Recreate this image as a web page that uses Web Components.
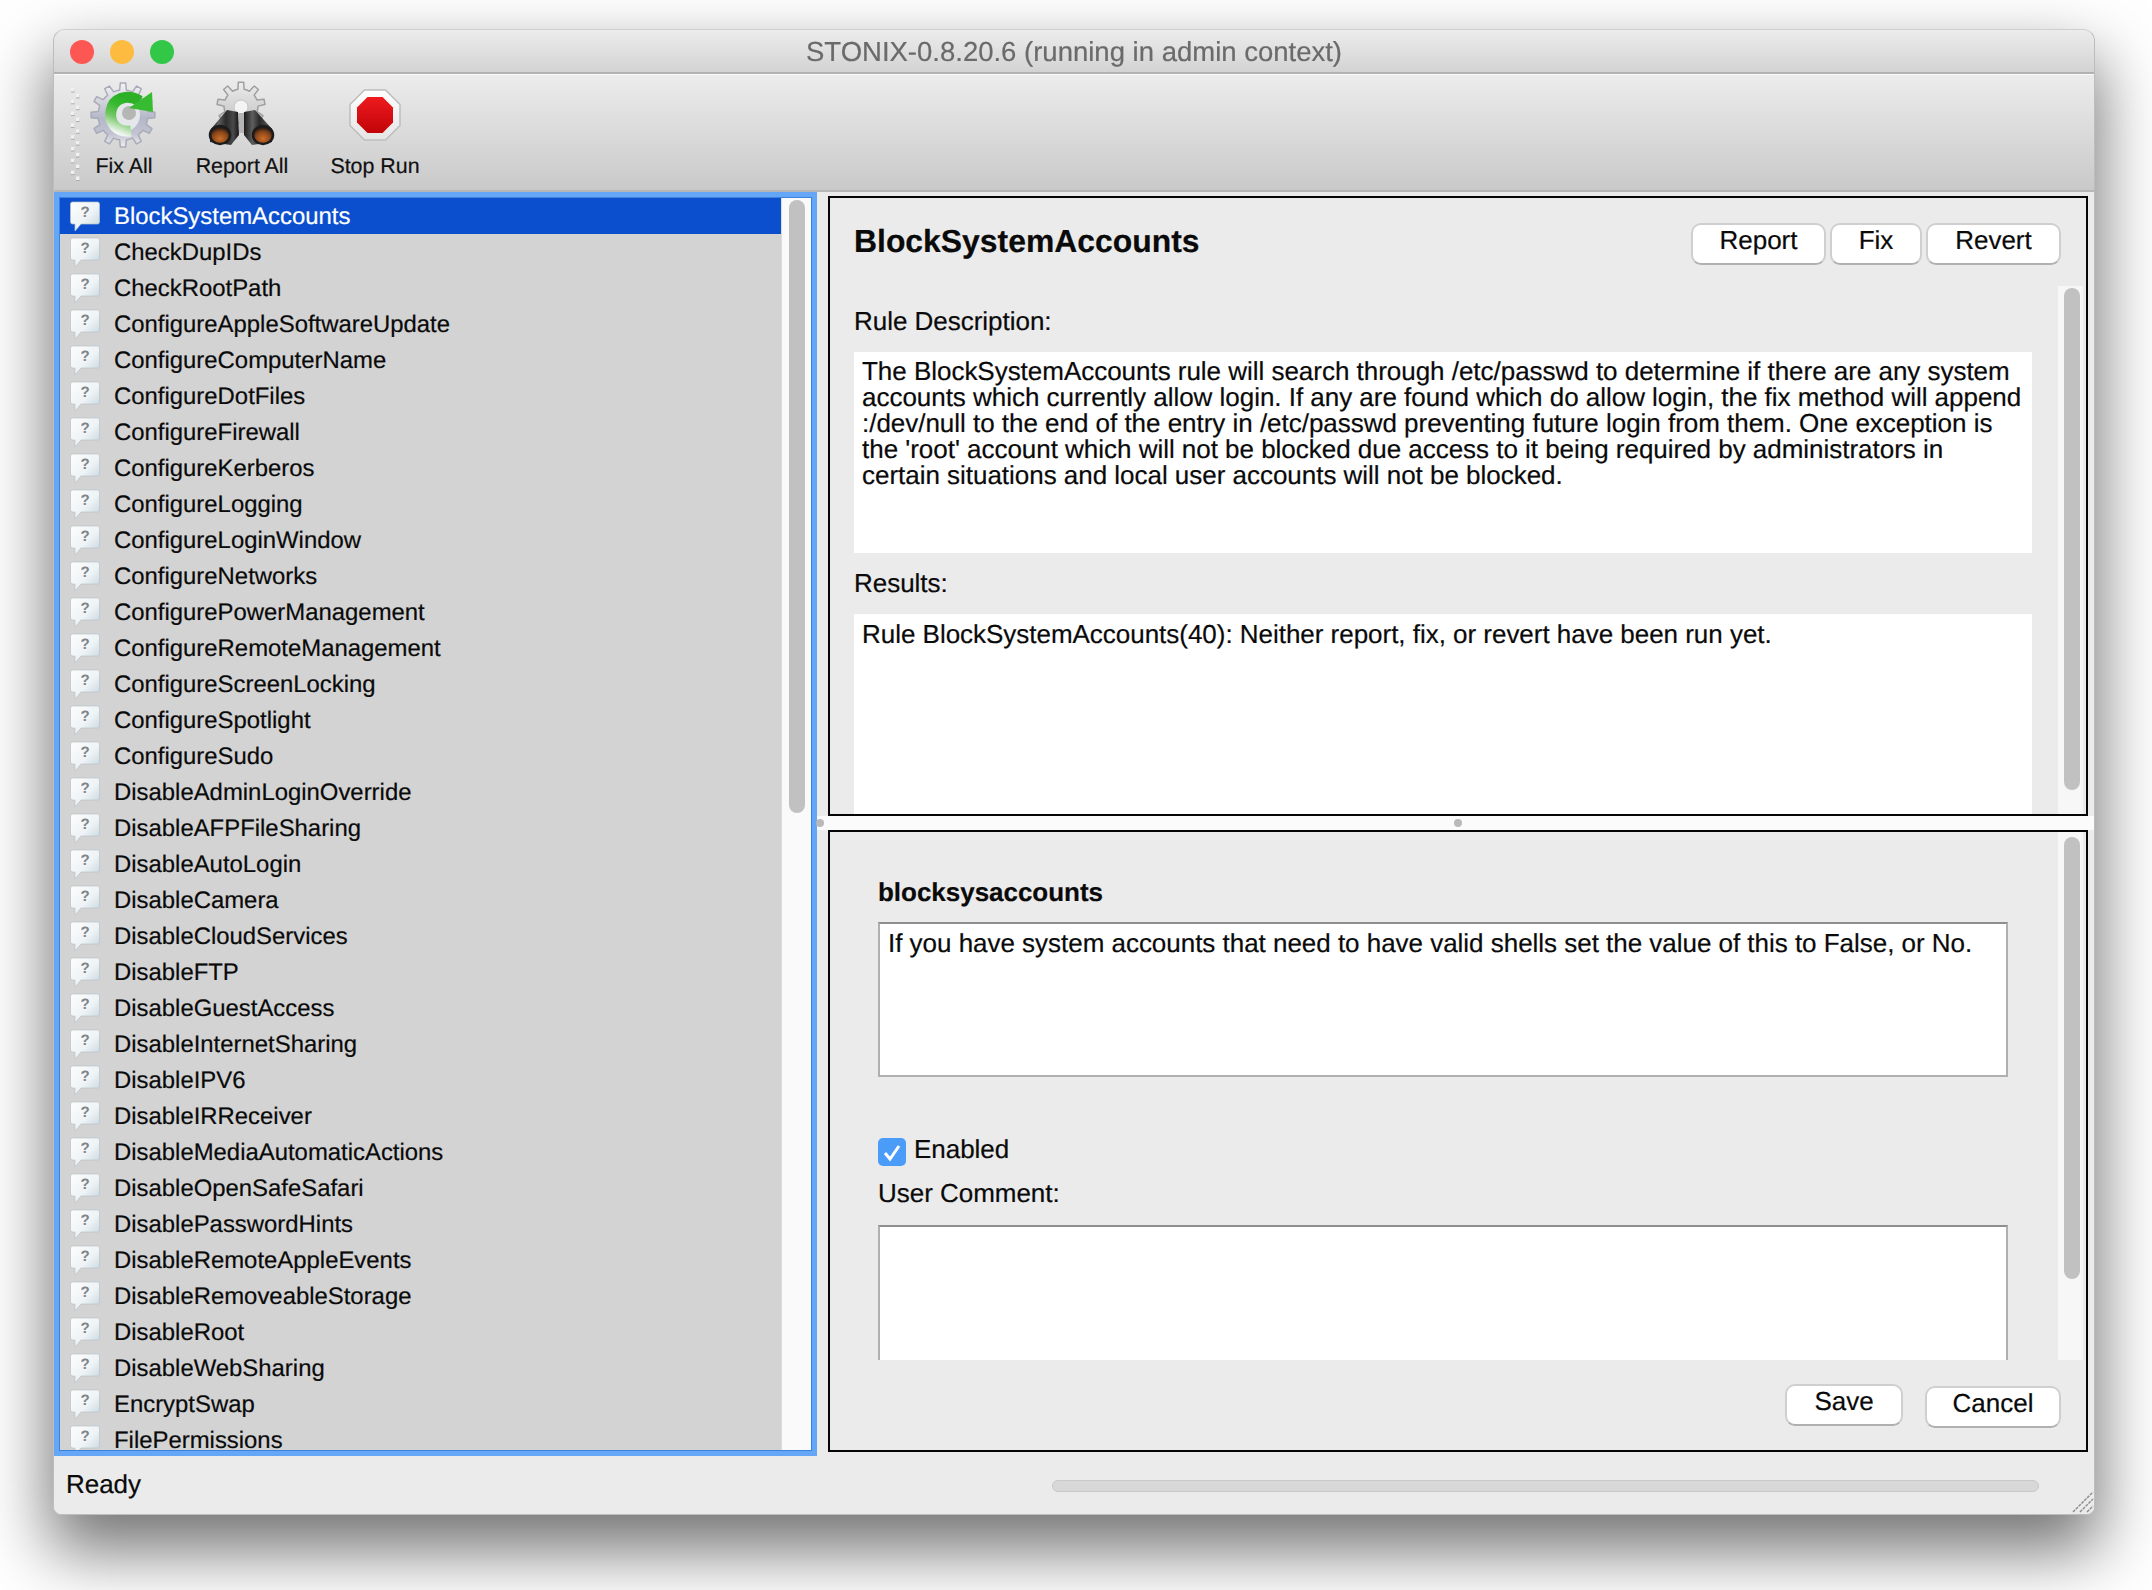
<!DOCTYPE html>
<html><head><meta charset="utf-8"><title>STONIX</title>
<style>
html,body{margin:0;padding:0;background:#fff;overflow:hidden;height:1590px}
body{font-family:"Liberation Sans",Arial,sans-serif;font-size:26px;letter-spacing:-.027px;color:#0a0a0a;text-rendering:geometricPrecision;-webkit-text-stroke:.2px currentColor}
</style></head><body>
<stonix-window></stonix-window>
<script>
function def(name, css, html, init){
  customElements.define(name, class extends HTMLElement{
    constructor(){super();const r=this.attachShadow({mode:'open'});const t=document.createElement('template');t.innerHTML='<style>'+css+'</style>'+html;r.appendChild(t.content.cloneNode(true));}
    connectedCallback(){if(init&&!this._i){this._i=1;init.call(this,this.shadowRoot);}}
  });
}
function gear(cx,cy,R,r,n){
  let d='';const st=Math.PI*2/n;
  for(let i=0;i<n;i++){
    const a=i*st-Math.PI/2;
    const p=[[a-st*.5,r],[a-st*.26,r],[a-st*.16,R],[a+st*.16,R],[a+st*.26,r]];
    p.forEach((q,j)=>{d+=(i==0&&j==0?'M':'L')+(cx+q[1]*Math.cos(q[0])).toFixed(2)+' '+(cy+q[1]*Math.sin(q[0])).toFixed(2)+' ';});
  }
  return d+'Z';
}
const ICONS={
 fix:`<svg width="76" height="76" viewBox="-38 -38 76 76">
  <defs><linearGradient id="g" x1="0" y1="0" x2="0" y2="1"><stop offset="0" stop-color="#f4f4f4"/><stop offset=".55" stop-color="#b4b7c8"/><stop offset=".8" stop-color="#c2c4d2"/><stop offset="1" stop-color="#efeff1"/></linearGradient>
  <linearGradient id="a" x1=".1" y1="1" x2=".45" y2="0"><stop offset="0" stop-color="#f2f6f2"/><stop offset=".4" stop-color="#71c763"/><stop offset=".75" stop-color="#35b92e"/><stop offset="1" stop-color="#2cb028"/></linearGradient></defs>
  <path d="${gear(-1,0,32,25,12)}" fill="url(#g)" stroke="#a9abb8" stroke-width="1.500" stroke-linejoin="round"/>
  <circle cx="-1" cy="0" r="17" fill="#e6e7ea"/>
  <circle cx="5" cy="-2" r="7" fill="#b4b7b4"/>
  <path d="M7 16 C-8 18 -15 7 -13 -4 C-11 -16 2 -22 16 -14" fill="none" stroke="url(#a)" stroke-width="11"/>
  <path d="M28 -23 L29 -3 L5 -7 Z" fill="#37bb30"/>
 </svg>`,
 report:`<svg width="76" height="76" viewBox="-38 -38 76 76">
  <defs><linearGradient id="g" x1="0" y1="0" x2="0" y2="1"><stop offset="0" stop-color="#ececec"/><stop offset="1" stop-color="#bdbdbd"/></linearGradient>
  <radialGradient id="l" cx=".5" cy=".7" r=".6"><stop offset="0" stop-color="#cc6e28"/><stop offset=".65" stop-color="#86451a"/><stop offset="1" stop-color="#2a1c14"/></radialGradient>
  <linearGradient id="b" x1="0" y1="0" x2="1" y2="0"><stop offset="0" stop-color="#1c1c1c"/><stop offset=".3" stop-color="#5e5e5e"/><stop offset=".55" stop-color="#2a2a2a"/><stop offset=".8" stop-color="#4a4a4a"/><stop offset="1" stop-color="#151515"/></linearGradient></defs>
  <path d="${gear(-1,-9,24,17,9)}" fill="url(#g)" stroke="#9f9f9f" stroke-width="1.500" stroke-linejoin="round"/>
  <circle cx="-1" cy="-8" r="7" fill="#f4f4f4" stroke="#c4c4c4"/>
  <path d="M-15 -5 L-4 -3 L-3 20 L-11 30 L-32 27 L-31 14 Z" fill="url(#b)"/>
  <path d="M13 -5 L2 -3 L2 20 L10 30 L30 27 L30 14 Z" fill="url(#b)"/>
  <rect x="-3" y="-2" width="5" height="20" fill="#b5b5b5"/>
  <ellipse cx="-22" cy="20" rx="10" ry="9" fill="url(#l)" stroke="#1c1c1c" stroke-width="2.500"/>
  <ellipse cx="21" cy="20" rx="10" ry="9" fill="url(#l)" stroke="#1c1c1c" stroke-width="2.500"/>
 </svg>`,
 stop:`<svg width="76" height="76" viewBox="-38 -38 76 76">
  <defs><linearGradient id="r" x1="0" y1="0" x2="0" y2="1"><stop offset="0" stop-color="#ee1a1e"/><stop offset="1" stop-color="#c00408"/></linearGradient>
  <linearGradient id="w" x1="0" y1="0" x2="0" y2="1"><stop offset="0" stop-color="#fff"/><stop offset="1" stop-color="#e4e4e4"/></linearGradient></defs>
  <path d="M-10.500 -25 L10.500 -25 L25 -10.500 L25 10.500 L10.500 25 L-10.500 25 L-25 10.500 L-25 -10.500 Z" fill="url(#w)" stroke="#bdbdbd" stroke-width="1.500" stroke-linejoin="round"/>
  <path d="M-7.500 -18 L7.500 -18 L18 -7.500 L18 7.500 L7.500 18 L-7.500 18 L-18 7.500 L-18 -7.500 Z" fill="url(#r)"/>
 </svg>`};

def('title-bar',`:host{display:flex;align-items:center;justify-content:center;position:relative;box-sizing:border-box;height:44px;padding-top:2px;background:linear-gradient(#ececec,#d3d3d3);border-bottom:2px solid #b2b2b2;border-radius:12px 12px 0 0;color:#6a6a6a;font-size:27.5px;letter-spacing:0;flex:none}
.l{position:absolute;left:16px;top:10px;display:flex;gap:16px}
i{display:block;width:24px;height:24px;border-radius:50%}`,
`<div class="l"><i style="background:#fc5753"></i><i style="background:#fdbc40"></i><i style="background:#33c748"></i></div><slot></slot>`);

def('tool-button',`:host{display:flex;flex-direction:column;align-items:center;font-size:21.4px;letter-spacing:0;line-height:26px;color:#111}
.i{height:76px;margin-top:2px}svg{display:block}.t{white-space:nowrap}`,
`<div class="i"></div><div class="t"><slot></slot></div>`,
function(r){r.querySelector('.i').innerHTML=ICONS[this.getAttribute('icon')];this.style.width=this.getAttribute('w')+'px';});

def('tool-handle',`:host{display:block;width:10px;height:94px;margin:12px 4px 0 16px}svg{display:block}`,`<svg width="10" height="94"></svg>`,
function(r){let s='';for(let i=0;i<16;i++){const x=i%2?6:1,y=1+i*5.9;s+=`<rect x="${x}" y="${y+1}" width="3.5" height="3.5" fill="#a9a9a9"/><rect x="${x}" y="${y}" width="3.5" height="3.5" fill="#f1f1f1"/>`;}r.querySelector('svg').innerHTML=s;});

def('tool-bar',`:host{display:flex;height:115px;flex:none;border-top:1px solid #fbfbfb;border-bottom:2px solid #b6b6b6;background:linear-gradient(#ececec,#c9c9c9)}
::slotted(tool-button){margin-right:20px}`,`<slot></slot>`);

def('scroll-track',`:host{display:block;flex:none;box-sizing:border-box;background:#f7f7f7;width:25px}
.t{background:#c1c1c1;border-radius:8px;width:16px;margin-left:6px}`,`<div class="t"></div>`,
function(r){const t=r.querySelector('.t');t.style.marginTop=(this.getAttribute('top')||2)+'px';t.style.height=this.getAttribute('h')+'px';if(this.hasAttribute('left'))t.style.marginLeft=this.getAttribute('left')+'px';});

def('rule-item',`:host{display:flex;align-items:center;box-sizing:border-box;height:36px;flex:none;padding:2px 0 0 10px;gap:14px;font-size:23.9px;letter-spacing:0;color:#0a0a0a;white-space:nowrap}
:host([selected]){background:#0b4fcf;color:#fff}svg{display:block;flex:none;margin-top:-2px}
text{font:bold 15px "Liberation Sans",sans-serif;fill:#7f8488;stroke:none}`,
`<svg width="30" height="32" viewBox="0 0 30 32"><defs><linearGradient id="b" x1="0" y1="0" x2="1" y2="1"><stop offset="0" stop-color="#fdfdfd"/><stop offset=".55" stop-color="#eef3f5"/><stop offset="1" stop-color="#bfd2dc"/></linearGradient></defs>
<path d="M2.500 2 H27.500 Q29.500 2 29.500 4 V22 Q29.500 24 27.500 24 H11 L5 31 L5 24 H2.500 Q.5 24 .5 22 V4 Q.5 2 2.500 2 Z" fill="url(#b)" stroke="#b9c3c9" stroke-opacity=".7"/>
<text x="15" y="17" text-anchor="middle">?</text></svg><slot></slot>`);

def('rule-list',`:host{display:flex;box-sizing:border-box;width:763px;flex:none;height:100%;border:5px solid #66a6f6;box-shadow:inset 0 0 0 1px #3b82dc;background:#d3d3d3;overflow:hidden}
.rows{flex:1;display:flex;flex-direction:column;overflow:hidden;margin:1px 0 1px 1px}
scroll-track{width:30px;background:#fafafa;border-left:1px solid #dcdcdc;margin:1px 1px 1px 0}`,
`<div class="rows"><slot></slot></div><scroll-track h="613" left="7"></scroll-track>`);

def('push-button',`:host{display:flex;justify-content:center;box-sizing:border-box;height:42px;background:#fff;border:2px solid #cfcfcf;border-bottom-color:#b0b0b0;border-radius:10px;line-height:30px;font-size:26px;color:#0a0a0a;flex:none}`,`<slot></slot>`,
function(){this.style.width=this.getAttribute('w')+'px';});

def('read-box',`:host{display:block;background:#fff;padding:6px 8px;line-height:26px;font-size:26px;color:#0a0a0a;white-space:nowrap;overflow:hidden;box-sizing:border-box}`,`<slot></slot>`);
def('edit-box',`:host{display:block;background:#fff;box-sizing:border-box;border:2px solid #b0b0b0;border-top-color:#8e8e8e;padding:6px 8px;line-height:26px;font-size:26px;color:#0a0a0a;white-space:nowrap}`,`<slot></slot>`);
def('check-box',`:host{display:flex;align-items:flex-start;gap:8px;line-height:32px;height:33px}
.c{width:28px;height:28px;margin-top:5px;border-radius:5px;background:#4a9cf8;display:block;flex:none}`,
`<svg class="c" viewBox="0 0 28 28"><path d="M7 15 L12 21 L21 8" fill="none" stroke="#fff" stroke-width="3"/></svg><slot></slot>`);

def('rule-panel',`:host{display:flex;flex-direction:column;box-sizing:border-box;height:620px;border:2px solid #050505;background:#ebebeb;overflow:hidden;flex:none}
.h{display:flex;align-items:flex-start;padding:25px 25px 23px 24px;height:40px;flex:none}
.ti{flex:1;font-size:31.9px;letter-spacing:0;font-weight:bold;line-height:36px}
.btn{display:flex;gap:4px}
.b{display:flex;flex:1;min-height:0}
.c{flex:1;padding:20px 26px 0 24px;min-width:0;overflow:hidden}
.lab{line-height:30px}
read-box{margin-top:16px}
scroll-track{margin-right:3px}`,
`<div class="h"><div class="ti"><slot name="title"></slot></div><div class="btn"><slot name="btn"></slot></div></div>
<div class="b"><div class="c"><div class="lab">Rule Description:</div><read-box style="height:201px"><slot name="desc"></slot></read-box>
<div class="lab" style="margin-top:15px">Results:</div><read-box style="height:220px;padding-top:7px"><slot name="res"></slot></read-box></div><scroll-track h="502"></scroll-track></div>`);

def('config-panel',`:host{display:flex;flex-direction:column;box-sizing:border-box;height:622px;border:2px solid #050505;background:#ebebeb;overflow:hidden;flex:none}
.b{display:flex;height:528px;flex:none}
.c{flex:1;min-width:0;padding:45px 50px 0 48px;overflow:hidden}
.n{font-weight:bold;line-height:30px}.lab{line-height:30px;margin-top:12px}
.f{display:flex;justify-content:flex-end;align-items:flex-start;gap:22px;padding:24px 25px 0 0}
scroll-track{margin-right:3px}`,
`<div class="b"><div class="c"><div class="n"><slot name="name"></slot></div>
<edit-box style="margin-top:15px;height:155px"><slot name="help"></slot></edit-box>
<check-box style="margin-top:56px"><slot name="check"></slot></check-box>
<div class="lab"><slot name="uc"></slot></div><edit-box style="margin-top:17px;height:220px"></edit-box></div>
<scroll-track top="5" h="442"></scroll-track></div><div class="f"><slot name="foot"></slot></div>`);

def('split-handle',`:host{display:flex;align-items:center;height:14px;background:#fbfbfb;flex:none}
i{display:block;width:8px;height:8px;border-radius:50%;background:#b9b9b9}`,`<i style="margin-left:-1px"></i><i style="margin-left:630px"></i>`);

def('status-bar',`:host{display:flex;align-items:center;position:relative;height:58px;flex:none;padding-left:12px;background:#ebebeb;border-radius:0 0 8px 8px;line-height:30px}
.t{margin-top:-2px}
.p{position:absolute;left:998px;top:24px;width:987px;height:12px;box-sizing:border-box;background:#d8d8d8;border:1px solid #c8c8c8;border-radius:6px}
svg{position:absolute;right:0;bottom:1px}`,
`<div class="t"><slot></slot></div><div class="p"></div><svg width="22" height="22" viewBox="0 0 22 22"><path d="M1 21 L21 1 M8 21 L21 8 M15 21 L21 15" stroke="#8f8f8f" stroke-width="1.500" stroke-dasharray="3 1"/></svg>`);

def('stonix-window',`:host{display:flex;flex-direction:column;box-sizing:border-box;width:2042px;height:1486px;margin:29px 0 0 53px;background:#ebebeb;border:1px solid #bdbdbd;border-top-color:#cfcfcf;border-radius:12px 12px 8px 8px;box-shadow:0 32px 66px 4px rgba(0,0,0,.55);filter:blur(.45px)}
.m{display:flex;height:1264px;flex:none;background:#ebebeb}
.r{display:flex;flex-direction:column;flex:1;padding-top:4px;min-width:0}
rule-panel,config-panel{margin:0 6px 0 11px}`,
`<title-bar>STONIX-0.8.20.6 (running in admin context)</title-bar>
<tool-bar><tool-handle></tool-handle><tool-button icon="fix" w="80">Fix All</tool-button><tool-button icon="report" w="116">Report All</tool-button><tool-button icon="stop" w="110">Stop Run</tool-button></tool-bar>
<div class="m"><rule-list id="list"></rule-list><div class="r">
<rule-panel><span slot="title">BlockSystemAccounts</span>
<push-button slot="btn" w="135">Report</push-button><push-button slot="btn" w="92">Fix</push-button><push-button slot="btn" w="135">Revert</push-button>
<span slot="desc">The BlockSystemAccounts rule will search through /etc/passwd to determine if there are any system<br>accounts which currently allow login. If any are found which do allow login, the fix method will append<br>:/dev/null to the end of the entry in /etc/passwd preventing future login from them. One exception is<br>the 'root' account which will not be blocked due access to it being required by administrators in<br>certain situations and local user accounts will not be blocked.</span>
<span slot="res">Rule BlockSystemAccounts(40): Neither report, fix, or revert have been run yet.</span></rule-panel>
<split-handle></split-handle>
<config-panel><span slot="name">blocksysaccounts</span>
<span slot="help">If you have system accounts that need to have valid shells set the value of this to False, or No.</span>
<span slot="check">Enabled</span><span slot="uc">User Comment:</span>
<push-button slot="foot" w="118">Save</push-button><push-button slot="foot" w="136" style="margin-top:2px">Cancel</push-button></config-panel>
</div></div>
<status-bar>Ready</status-bar>`,
function(r){
 const names="BlockSystemAccounts CheckDupIDs CheckRootPath ConfigureAppleSoftwareUpdate ConfigureComputerName ConfigureDotFiles ConfigureFirewall ConfigureKerberos ConfigureLogging ConfigureLoginWindow ConfigureNetworks ConfigurePowerManagement ConfigureRemoteManagement ConfigureScreenLocking ConfigureSpotlight ConfigureSudo DisableAdminLoginOverride DisableAFPFileSharing DisableAutoLogin DisableCamera DisableCloudServices DisableFTP DisableGuestAccess DisableInternetSharing DisableIPV6 DisableIRReceiver DisableMediaAutomaticActions DisableOpenSafeSafari DisablePasswordHints DisableRemoteAppleEvents DisableRemoveableStorage DisableRoot DisableWebSharing EncryptSwap FilePermissions".split(' ');
 const l=r.getElementById('list');
 names.forEach((n,i)=>{const e=document.createElement('rule-item');e.textContent=n;if(i==0)e.setAttribute('selected','');l.appendChild(e);});
});
</script>
</body></html>
